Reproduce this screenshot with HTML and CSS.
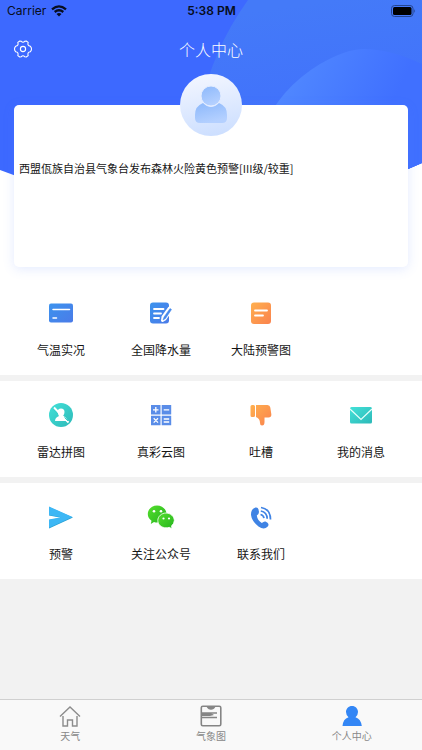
FILE: index.html
```html
<!DOCTYPE html>
<html lang="zh-CN">
<head>
<meta charset="utf-8">
<meta name="viewport" content="width=device-width, initial-scale=1">
<title>个人中心</title>
<link rel="stylesheet" href="styles.css">
</head>
<body>
<header class="hero">
  <svg class="hero-bg" viewBox="0 0 422 200" preserveAspectRatio="none" aria-hidden="true">
    <defs>
      <linearGradient id="sweep" x1="0.6" y1="0" x2="0.75" y2="1"><stop offset="0" stop-color="#447af8"/><stop offset="1" stop-color="#3f6bff"/></linearGradient>
      <linearGradient id="orb" x1="0.1" y1="0.2" x2="0.75" y2="0.5"><stop offset="0" stop-color="#5189ff"/><stop offset="1" stop-color="#4070ff"/></linearGradient>
      <clipPath id="dome"><path d="M0 0H422V163Q330 205 211 205Q90 205 0 170Z"/></clipPath>
    </defs>
    <g clip-path="url(#dome)">
      <path d="M0 0H422V200H0Z" fill="#3d69ff"/>
      <path d="M248 0Q212 50 200 110V200H422V0Z" fill="url(#sweep)"/>
      <path d="M262 130Q280 88 320 64Q346 49 364 49Q390 49 422 64V200H262Z" fill="url(#orb)"/>
    </g>
  </svg>
  <div class="status">
    <span class="carrier">Carrier
      <svg width="16" height="12" viewBox="0 0 16 12" aria-hidden="true"><g fill="none" stroke="#070d20" stroke-width="2.3"><path d="M1 4.3Q8-1.6 15 4.3"/><path d="M3.7 7Q8 3.5 12.3 7"/></g><path d="M5.5 8.9Q8 7 10.5 8.9L8 11.5Z" fill="#070d20"/></svg>
    </span>
    <span class="clock">5:38 PM</span>
    <svg class="battery" width="25" height="12" viewBox="0 0 25 12" aria-hidden="true"><rect x=".5" y=".5" width="21.500" height="11" rx="3" fill="none" stroke="#24458f"/><rect x="2" y="2" width="18.500" height="8" rx="1.500" fill="#000"/><path d="M23.300 4Q25 6 23.300 8Z" fill="#24458f"/></svg>
  </div>
  <div class="nav">
    <button class="settings" type="button" aria-label="设置">
      <svg width="18" height="18" viewBox="0 0 18 18" fill="none" stroke="#fff" stroke-width="1.100" stroke-linejoin="round"><path d="M5.800 1L7.200 1.200Q9 3.400 10.800 1.200L12.200 1L14.200 2.400Q13 5.700 16.400 6.200L17.400 8V10L16.400 11.800Q13 12.300 14.200 15.600L12.200 17L10.800 16.800Q9 14.600 7.200 16.800L5.800 17L3.800 15.600Q5 12.300 1.600 11.800L.6 10V8L1.600 6.200Q5 5.700 3.800 2.400Z"/><circle cx="9" cy="9" r="2.600"/></svg>
    </button>
    <h1>个人中心</h1>
  </div>
  <section class="card">
    <svg class="avatar" viewBox="0 0 62 62" role="img" aria-label="头像">
      <defs>
        <linearGradient id="disc" x1=".3" y1="0" x2=".5" y2="1"><stop offset="0" stop-color="#f3f6ff"/><stop offset="1" stop-color="#cddfff"/></linearGradient>
        <linearGradient id="person" x1="0" y1="0" x2=".4" y2="1"><stop offset="0" stop-color="#8cb8fb"/><stop offset="1" stop-color="#b4d0ff"/></linearGradient>
      </defs>
      <circle cx="31" cy="31" r="31" fill="url(#disc)"/>
      <path d="M23 29Q31 37 39 29Q47 32 47 41V44Q47 49 42 49H20Q15 49 15 44V41Q15 32 23 29Z" fill="url(#person)"/>
      <circle cx="31" cy="22" r="10" fill="url(#person)" stroke="#e4edff"/>
    </svg>
    <p>西盟佤族自治县气象台发布森林火险黄色预警[III级/较重]</p>
  </section>
</header>
<main>
  <nav class="group">
    <a href="#temperature"><svg viewBox="0 0 28 28"><defs><linearGradient id="blue" x1="0" y1="0" x2="1" y2="1"><stop offset="0" stop-color="#3c93ee"/><stop offset="1" stop-color="#4b7be8"/></linearGradient></defs><rect x="2" y="4.500" width="24" height="19" rx="2" fill="url(#blue)"/><path d="M6 10.500H22.500M6 19H9.500" stroke="#fff" stroke-width="1.500" stroke-linecap="round"/></svg>气温实况</a>
    <a href="#rainfall"><svg viewBox="0 0 28 28"><rect x="3" y="3.500" width="19" height="21" rx="3" fill="url(#blue)"/><path d="M7 10H16.500M7 14.500H14M7 19H12" stroke="#fff" stroke-width="1.800" stroke-linecap="round"/><path d="M15.500 21.500L16 18L22.500 9L24.500 10.500L18 20Z" stroke="#fff" stroke-width="3" stroke-linejoin="round"/><path d="M16 21L17 18L23 9.500L24.500 10.500L18.500 19.500Z" fill="#4588ec" stroke="#4588ec" stroke-width=".5"/></svg>全国降水量</a>
    <a href="#warnings-map"><svg viewBox="0 0 28 28"><defs><linearGradient id="orange" x1="0" y1="0" x2="1" y2="1"><stop offset="0" stop-color="#ffb04e"/><stop offset="1" stop-color="#fa824e"/></linearGradient></defs><rect x="4" y="3.500" width="20" height="21.500" rx="3" fill="url(#orange)"/><path d="M8 11.500H20M8 16.500H16" stroke="#fff" stroke-width="1.800" stroke-linecap="round"/></svg>大陆预警图</a>
  </nav>
  <nav class="group">
    <a href="#radar"><svg viewBox="0 0 28 28"><defs><linearGradient id="teal" x1="0" y1="0" x2="1" y2="1"><stop offset="0" stop-color="#43e1d8"/><stop offset="1" stop-color="#2db9b8"/></linearGradient></defs><circle cx="14" cy="14" r="12" fill="url(#teal)"/><path d="M10.500 11Q10.500 7.500 14 7.500Q17.500 7.500 17.500 11Q17.500 13.500 16 15Q20 16.500 20 20H8Q8 16.500 12 15Q10.500 13.500 10.500 11Z" fill="#fff"/><path d="M7 6.500L21.500 21.500" stroke="#fff" stroke-width="1.800"/><path d="M6.500 8.500L11 13.200M17.500 16.500L21 20" stroke="#36cfc9" stroke-width="1"/></svg>雷达拼图</a>
    <a href="#cloud"><svg viewBox="0 0 28 28"><path d="M4 4H13.500V13.500H4ZM14.700 4H24.200V13.500H14.700ZM4 14.700H13.500V24.200H4ZM14.700 14.700H24.200V24.200H14.700Z" fill="#5a8de8"/><path d="M6 8.800H11.500M8.800 6V11.500M16.700 8.800H22.200M6.700 17.300L11 21.600M11 17.300L6.700 21.600M16.700 18H22.200M16.700 21H22.200" stroke="#fff" stroke-width="1.300"/></svg>真彩云图</a>
    <a href="#feedback"><svg viewBox="0 0 28 28"><path d="M5 4H6.500Q8 4 8 5.500V14.500Q8 16 6.500 16H5Q3.500 16 3.500 14.500V5.500Q3.500 4 5 4ZM9 4H20.500Q23 4 23.300 6.500L24.300 13Q24.700 16.500 21.500 16.500H17.500V21Q17.500 24.500 15 24.500Q13 24.500 13 22Q13 17.500 9 16Z" fill="url(#orange)"/></svg>吐槽</a>
    <a href="#messages"><svg viewBox="0 0 28 28"><rect x="3" y="6" width="22" height="16.500" rx="1.500" fill="url(#teal)"/><path d="M3 8L14 18.500L25 8" fill="none" stroke="#e5fffb" stroke-width="1.200"/></svg>我的消息</a>
  </nav>
  <nav class="group">
    <a href="#alerts"><svg viewBox="0 0 28 28"><path d="M2 4L26 14.500L2 25.500V17L14 14.700L2 12.500Z" fill="#279fd1"/><path d="M2 3.500L25.500 14L2 24.800V16.500L14 14.200L2 12Z" fill="#3db7f5"/></svg>预警</a>
    <a href="#follow"><svg viewBox="0 0 28 28"><defs><linearGradient id="green" x1="0" y1="0" x2="1" y2="1"><stop offset="0" stop-color="#55df2d"/><stop offset="1" stop-color="#24b31e"/></linearGradient></defs><path d="M10 2.500C15 2.500 19.500 6 19.500 11S15 19.500 10 19.500Q8.500 19.500 7 19L3.800 21L4.500 17.800Q.8 15 .8 11C.8 6 5 2.500 10 2.500Z" fill="url(#green)"/><path d="M19 10C23.500 10 27.300 13.500 27.300 17.500Q27.300 20.500 24.500 23L25 25.700L22.200 24.300Q21 24.800 19 24.800C14.500 24.800 10.800 21.500 10.800 17.500S14.500 10 19 10Z" fill="url(#green)" stroke="#fff" stroke-width=".8"/><g fill="#fff"><circle cx="7" cy="8.300" r="1.300"/><circle cx="14" cy="8.300" r="1.300"/><circle cx="16.500" cy="15.500" r="1.100"/><circle cx="22" cy="15.500" r="1.100"/></g></svg>关注公众号</a>
    <a href="#contact"><svg viewBox="0 0 28 28"><path d="M8.500 4.500Q11 4 11.500 6.500L12 9Q12 11 9.800 12.500Q10.500 17.500 14.800 20Q17 18 18.500 18.500L20.500 19.800Q22.500 21.500 20.500 23.800Q17 27.500 11.500 23.500Q5 18.500 4 12Q3.800 6 8.500 4.500Z" fill="#3f83e4"/><g fill="none" stroke="#3f83e4" stroke-width="1.700"><path d="M14 4.500Q23.500 6 23.500 16.500"/><path d="M13.800 8Q20 9 20.200 15.800"/><path d="M13.500 11.500Q16.500 12 17 15.100"/></g></svg>联系我们</a>
  </nav>
</main>
<footer class="tabs">
  <a href="#weather"><svg viewBox="0 0 24 24" fill="none" stroke="#8c8c8c" stroke-width="1.400"><path d="M2 12.500L12 3L22 12.500M5 12V22H9.500V16H14.500V22H19V12"/></svg>天气</a>
  <a href="#maps"><svg viewBox="0 0 24 24"><rect x="2.300" y="2.300" width="19.500" height="19.500" rx="1.500" fill="none" stroke="#858585" stroke-width="1.600"/><path d="M7.500 2.500H16.500Q15 5.800 12 5.800T7.500 2.500Z" fill="#858585"/><path d="M3 9H18M3 13.500H18" stroke="#858585" stroke-width="1.500"/><path d="M3 9H12L15 11L11 12H3Z" fill="#858585"/></svg>气象图</a>
  <a href="#me" aria-current="page"><svg viewBox="0 0 24 24" fill="#3386f5"><path d="M12 2C15.500 2 18 4.700 18 8Q18 11 15.500 13.200Q21 15 21.800 22H2.500Q3 15 8.500 13.200Q6 11 6 8C6 4.700 8.500 2 12 2Z"/></svg>个人中心</a>
</footer>
</body>
</html>
```
FILE: styles.css
```css
* {
  box-sizing: border-box;
}

body {
  margin: 0;
  min-height: 100vh;
  display: flex;
  flex-direction: column;
  background: #f2f2f2;
  color: #161616;
  font-family: "Noto Sans CJK SC", sans-serif;
}

a {
  color: inherit;
  text-decoration: none;
}

.hero {
  position: relative;
  padding-bottom: 18px;
  background: #fff;
}

.hero-bg {
  position: absolute;
  top: 0;
  left: 0;
  width: 100%;
  height: 200px;
}

.status {
  position: relative;
  display: grid;
  grid-template-columns: 1fr auto 1fr;
  align-items: center;
  height: 22px;
  padding: 0 6px 0 7px;
  color: #070d20;
  font: 12px/22px Inter, sans-serif;
}

.carrier {
  display: flex;
  align-items: center;
  gap: 5px;
}

.clock {
  font-weight: 600;
}

.battery {
  justify-self: end;
}

.nav {
  position: relative;
  display: grid;
  grid-template-columns: 18px 1fr 18px;
  align-items: center;
  height: 54px;
  padding: 0 14px;
}

.settings {
  display: flex;
  padding: 0;
  border: 0;
  background: none;
}

h1 {
  margin: 0;
  color: #fff;
  font-size: 16px;
  font-weight: 300;
  line-height: 24px;
  text-align: center;
}

.card {
  position: relative;
  min-height: 162px;
  margin: 29px 14px 0;
  padding: 55px 5px 16px;
  border-radius: 5px;
  background: #fff;
  box-shadow: 0 2px 12px rgba(80, 125, 255, 0.16);
}

.avatar {
  position: absolute;
  top: -31px;
  left: 50%;
  width: 62px;
  height: 62px;
  transform: translateX(-50%);
}

.card p {
  margin: 0;
  font-size: 11px;
  line-height: 16px;
}

main {
  display: flex;
  flex-direction: column;
  gap: 6px;
}

.group {
  display: grid;
  grid-template-columns: repeat(4, 1fr);
  padding: 20px 11px 8px;
  background: #fff;
}

.group:first-child {
  padding-top: 14px;
}

.group a {
  display: flex;
  flex-direction: column;
  align-items: center;
  gap: 14px;
  height: 68px;
  font-size: 12px;
  line-height: 18px;
}

.group svg {
  width: 28px;
  height: 28px;
}

.tabs {
  display: grid;
  grid-template-columns: repeat(3, 1fr);
  height: 51px;
  margin-top: auto;
  padding-top: 4px;
  border-top: 1px solid #d0d0d0;
  background: #f9f9f9;
  color: #888;
  font-size: 10px;
  line-height: 14px;
}

.tabs a {
  display: flex;
  flex-direction: column;
  align-items: center;
  gap: 1px;
}

.tabs svg {
  width: 24px;
  height: 24px;
}
```
